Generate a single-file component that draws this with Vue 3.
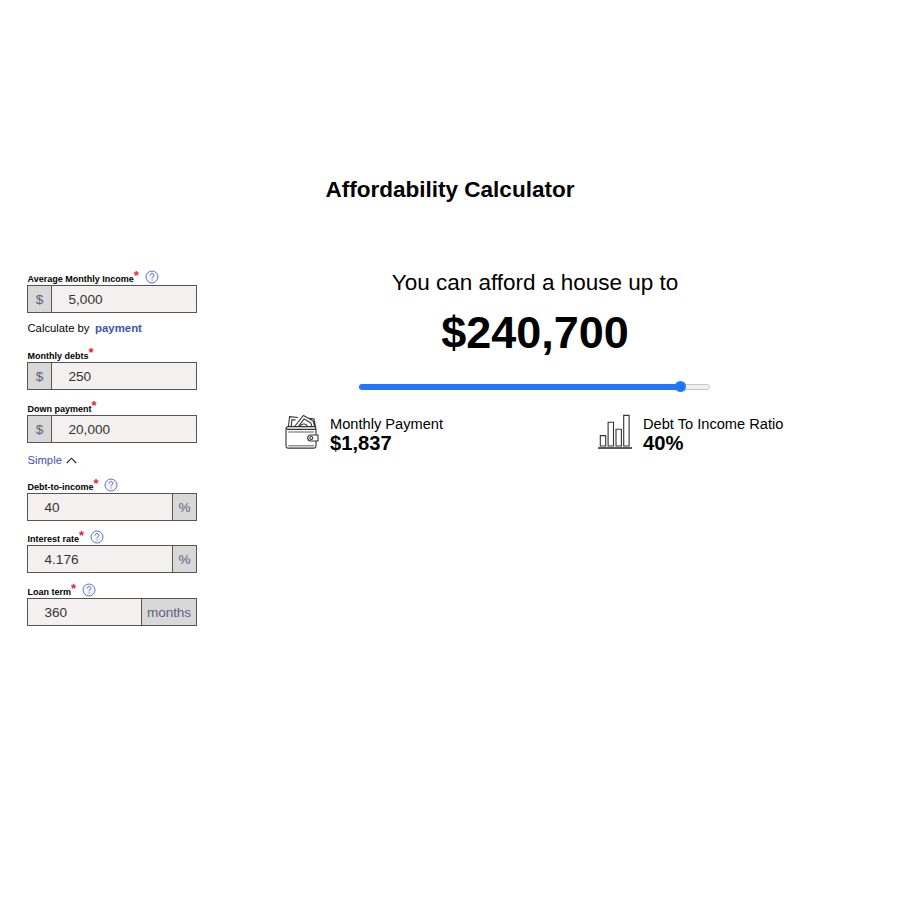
<script setup>
import { ref } from 'vue'

const income = { label: 'Average Monthly Income', value: '5,000', prefix: '$', help: true, cls: 'income' }
const money = [
  { label: 'Monthly debts', value: '250', prefix: '$', cls: 'debts' },
  { label: 'Down payment', value: '20,000', prefix: '$', cls: 'down' },
]
const advanced = [
  { label: 'Debt-to-income', value: '40', suffix: '%', help: true, cls: 'dti' },
  { label: 'Interest rate', value: '4.176', suffix: '%', help: true, cls: 'rate' },
  { label: 'Loan term', value: '360', suffix: 'months', help: true, cls: 'term' },
]
const groups = [[income], money, advanced]
const position = ref(92)
</script>

<template>
  <main class="page">
    <h1>Affordability Calculator</h1>
    <div class="columns">
      <form class="form" @submit.prevent>
        <template v-for="(group, g) in groups" :key="g">
          <div v-for="f in group" :key="f.label" class="field" :class="f.cls">
            <div class="label">
              <span>{{ f.label }}</span><span class="star">*</span>
              <svg v-if="f.help" class="help" viewBox="0 0 14 14">
                <circle cx="7" cy="7" r="6" />
                <path d="M5.1 5.5C5.1 4.2 5.9 3.6 7 3.6s1.9.7 1.9 1.7c0 1.4-1.8 1.5-1.8 3M7.1 9.5v1" />
              </svg>
            </div>
            <div class="box">
              <span v-if="f.prefix" class="addon pre">{{ f.prefix }}</span>
              <span class="value">{{ f.value }}</span>
              <span v-if="f.suffix" class="addon post">{{ f.suffix }}</span>
            </div>
          </div>
          <p v-if="g === 0" class="calc">Calculate by <a>payment</a></p>
          <p v-if="g === 1" class="simple">
            Simple
            <svg viewBox="0 0 11 7"><path d="M.8 6 5.5 1.2 10.2 6" /></svg>
          </p>
        </template>
      </form>

      <section class="result">
        <p class="lead">You can afford a house up to</p>
        <p class="amount">$240,700</p>
        <div class="slider">
          <div class="fill" :style="{ width: position + '%' }"></div>
          <div class="thumb"></div>
        </div>
        <div class="stats">
          <div class="stat">
            <svg class="wallet" viewBox="0 0 34 36">
              <path d="M3.4 13 4.6 2.6l8.4.9M6.1 13 7 5.6l3.6.4M9.2 13 18.4 1.4 28 6.8l2 6.2M12.8 13l6.3-8 6.6 3.8 1.4 4.2M15.2 13c0-3.8 6.8-4.3 7.3 0M24.2 4.3l4.8.7 1.6 8" />
              <path d="M3.2 12.6C.9 12.6.8 15.4 3 15.4h28v5.5M31 27v5.2c0 1.2-.7 1.9-1.9 1.9H2.9c-1.2 0-1.9-.7-1.9-1.9V13.8M3.2 12.6h26.3c1 0 1.5.9 1.5 2.8" />
              <path class="thin" d="M3.3 18h25.9M3.3 31.8h25.9" />
              <path d="M33 21h-7.3c-4 0-4 6 0 6H33z" />
              <circle cx="26.3" cy="24" r="1.5" />
            </svg>
            <div class="copy">
              <span>Monthly Payment</span>
              <strong>$1,837</strong>
            </div>
          </div>
          <div class="stat">
            <svg class="bars" viewBox="0 0 34 36">
              <path d="M2.3 32V21.6h5.4V32zM10.1 32V8.3h5.4V32zM18 32V15.2h5.4V32zM25.7 32V1.4h5.4V32z" />
              <path class="base" d="M0 34h34" />
            </svg>
            <div class="copy">
              <span>Debt To Income Ratio</span>
              <strong>40%</strong>
            </div>
          </div>
        </div>
      </section>
    </div>
  </main>
</template>

<style>
body {
  background: #fff;
}
</style>

<style scoped>
.page {
  box-sizing: border-box;
  height: 900px;
  padding-top: 177px;
  font-family: "Liberation Sans", Arial, sans-serif;
  font-size: 11.25px;
  color: #000;
}
h1, p {
  margin: 0;
}
h1 {
  text-align: center;
  font-size: 22.5px;
  line-height: 26px;
}
.columns {
  display: flex;
  padding: 66px 0 0 27px;
}
.form {
  width: 170px;
}
.field {
  display: flex;
  flex-direction: column;
}
.label {
  display: flex;
  height: 16px;
  font-size: 9px;
  font-weight: 700;
  line-height: 20px;
  white-space: nowrap;
}
.label > span:first-child {
  padding-left: 0.5px;
}
.star {
  color: #e8202a;
  font-size: 13px;
  line-height: 14px;
}
.help {
  width: 14px;
  height: 14px;
  margin-left: 6px;
  margin-top: 1px;
  fill: #f4f6fd;
  stroke: #5364b8;
  stroke-width: 0.9;
}
.dti .help {
  margin-left: 5px;
}
.rate .help, .term .help {
  margin-left: 5.5px;
}
.help path {
  fill: none;
  stroke-width: 1;
}
.box {
  box-sizing: border-box;
  display: flex;
  height: 28px;
  border: 1px solid #555;
  background: #f4f0ef;
  font-size: 13.6px;
  line-height: 27px;
}
.value {
  flex: 1;
  padding-left: 16.5px;
  color: #333;
}
.addon {
  box-sizing: border-box;
  background: #d8d8d8;
  color: #5b607d;
  text-align: center;
}
.pre {
  width: 24px;
  border-right: 1px solid #555;
}
.post {
  padding: 0 5px;
  border-left: 1px solid #555;
}
.dti .post, .rate .post {
  width: 24px;
}
.term .post {
  width: 55px;
  padding: 0 4px;
  letter-spacing: -0.1px;
}
.calc {
  height: 33px;
  padding-left: 0.5px;
  line-height: 31px;
}
.calc a {
  margin-left: 2.5px;
  color: #3f51b5;
  font-size: 11.4px;
  font-weight: 700;
}
.debts {
  margin-bottom: 9px;
}
.simple {
  height: 34px;
  padding-left: 0.5px;
  line-height: 34px;
  color: #3f51b5;
}
.simple svg {
  width: 11px;
  height: 7px;
  margin-left: 0.5px;
  vertical-align: 0.5px;
  fill: none;
  stroke: #222;
  stroke-width: 1.1;
}
.dti {
  margin-bottom: 8px;
}
.rate {
  margin-bottom: 9px;
}
.result {
  width: 500px;
  margin-left: 88px;
}
.lead {
  width: 500px;
  padding-top: 1px;
  text-align: center;
  font-size: 22.5px;
  line-height: 26px;
}
.amount {
  margin-top: 11px;
  text-align: center;
  font-size: 45px;
  font-weight: 700;
  line-height: 52px;
}
.slider {
  display: flex;
  align-items: center;
  box-sizing: border-box;
  width: 351px;
  height: 6px;
  margin: 24.5px 0 0 74px;
  border: 1px solid #c6c6c6;
  border-radius: 3px;
  background: #efefef;
}
.fill {
  flex: none;
  height: 6px;
  margin-left: -1px;
  border-radius: 3px 0 0 3px;
  background: #2076ff;
}
.thumb {
  flex: none;
  width: 11px;
  height: 11px;
  margin-left: -5px;
  border-radius: 50%;
  background: #2076ff;
}
.stats {
  display: flex;
  padding-top: 24.5px;
}
.stat {
  display: flex;
  width: 313px;
  flex: none;
}
.stat svg {
  width: 34px;
  height: 36px;
  fill: none;
  stroke: #333;
  stroke-width: 1.1;
}
.wallet .thin {
  stroke-width: 0.8;
}
.bars .base {
  stroke: #222;
  stroke-width: 1.3;
}
.copy {
  display: flex;
  flex-direction: column;
  margin-left: 11px;
  font-size: 14.63px;
  line-height: 20px;
  white-space: nowrap;
}
.copy strong {
  font-size: 20.2px;
  line-height: 19px;
}
</style>
